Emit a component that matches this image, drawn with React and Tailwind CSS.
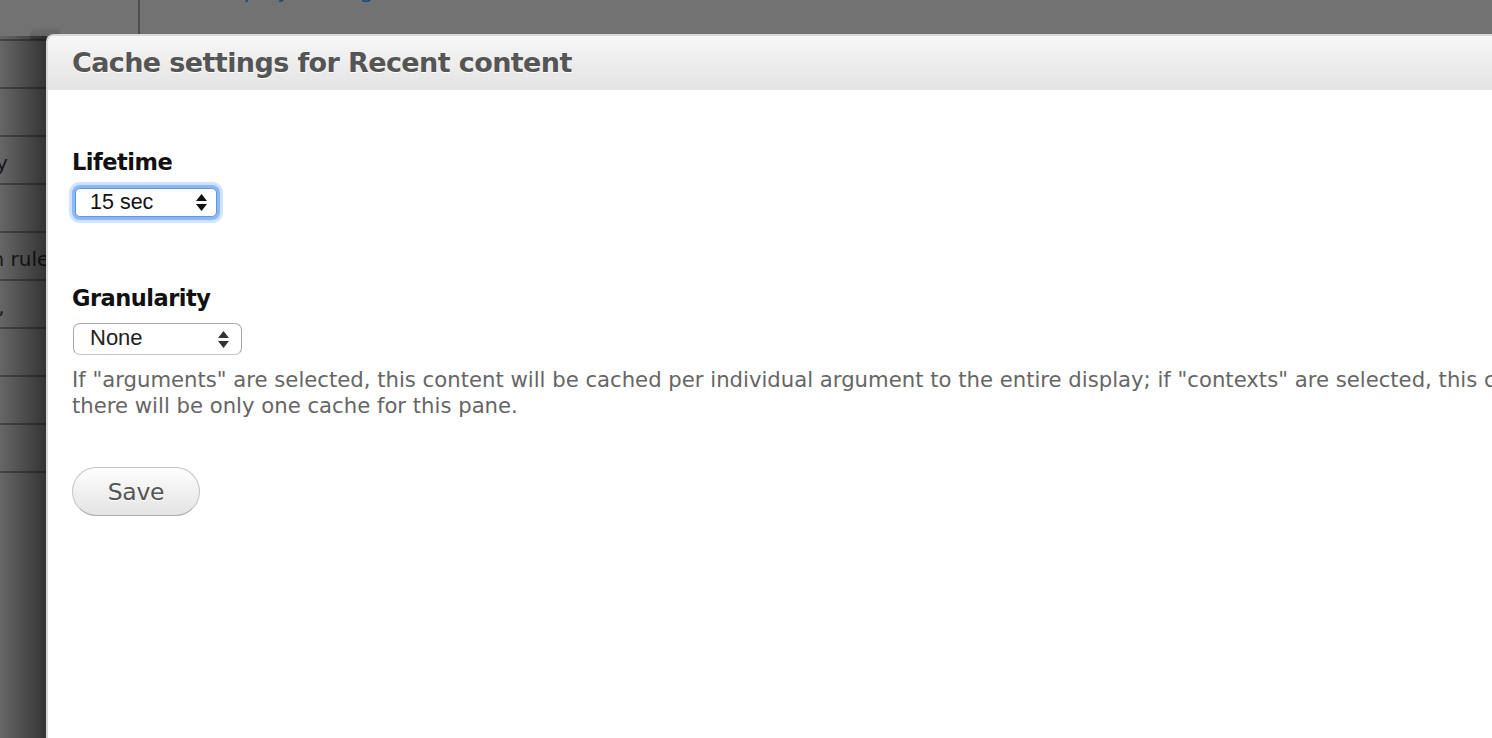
import React from 'react';

const sans = { fontFamily: '"DejaVu Sans", Verdana, sans-serif' };
const arial = { fontFamily: '"Liberation Sans", Arial, sans-serif' };

// little up/down triangles of a native select
const Arrows = ({ color = '#111' }) => (
  <svg width="11" height="17" viewBox="0 0 11 17" className="shrink-0">
    <path d="M5.5 0 L11 7 L0 7 Z" fill={color} />
    <path d="M0 10 L11 10 L5.5 17 Z" fill={color} />
  </svg>
);

const bgRows = [
  { text: '', ml: 0 },
  { text: '', ml: 0 },
  { text: 'Display', ml: -66 },
  { text: '', ml: 0 },
  { text: 'Selection rule', ml: -88 },
  { text: 'Context,', ml: -80 },
  { text: '', ml: 0 },
  { text: '', ml: 0 },
  { text: '', ml: 0 },
];

export default function App() {
  return (
    <div className="relative w-[1492px] h-[738px] overflow-hidden bg-[#727272]">
      {/* page behind the dialog */}
      <div className="flex h-full">
        <div className="w-[140px] shrink-0 border-r-2 border-[#4e4e4e] text-[20px] text-[#1c1c1c]" style={sans}>
          <div className="h-[41px] border-b-2 border-[#4e4e4e]" />
          {bgRows.map((r, i) => (
            <div
              key={i}
              className="h-[48px] border-b-2 border-[#4e4e4e] flex items-center pt-[6px] whitespace-nowrap"
            >
              {r.text && <span style={{ marginLeft: r.ml }}>{r.text}</span>}
            </div>
          ))}
        </div>
        <div className="flex-1 pl-[69px]">
          <div className="-mt-[21px] text-[22px] leading-[24px] text-[#0d4c84] whitespace-nowrap" style={sans}>
            Display settings
          </div>
        </div>
      </div>

      {/* dialog shadow on the left */}
      <div className="absolute left-0 top-[36px] bottom-0 w-[47px] bg-linear-to-r from-black/10 to-black/55" />
      <div className="absolute left-[30px] top-[26px] w-[30px] h-[14px] bg-linear-to-b from-transparent to-black/20 rounded-tl-[10px]" />

      {/* dialog */}
      <div className="absolute left-[46px] top-[34px] w-[1500px] h-[720px] bg-white border-l-2 border-t-2 border-[#d8d8d8] rounded-tl-[8px] overflow-hidden">
        <div className="h-[54px] flex items-center pl-[24px] bg-linear-to-b from-[#f7f7f7] to-[#e3e3e3]">
          <h1
            className="text-[27px] leading-[32px] font-bold tracking-[-0.6px] text-[#555] [text-shadow:0_1px_0_#fff]"
            style={sans}
          >
            Cache settings for Recent content
          </h1>
        </div>

        <div className="pl-[24px] pt-[59px]">
          <label className="block text-[22.5px] leading-[26px] font-bold tracking-[-0.5px] text-[#111]" style={sans}>
            Lifetime
          </label>
          <div className="mt-[13px] ml-[3px] w-[142px] h-[29px] rounded-[5px] bg-white border border-[#5f97e6] shadow-[0_0_0_3px_#8cb8f5,0_0_1px_6px_rgba(150,190,246,0.45)] flex items-center justify-between pl-[14px] pr-[9px]">
            <span className="text-[21.5px] leading-none text-[#111]" style={arial}>15 sec</span>
            <Arrows color="#111" />
          </div>

          <label className="block mt-[68px] text-[22.5px] leading-[26px] font-bold tracking-[-0.5px] text-[#111]" style={sans}>
            Granularity
          </label>
          <div className="mt-[12px] ml-[1px] w-[169px] h-[32px] rounded-[7px] bg-white border border-[#a9a9a9] border-b-[#c6c6c6] flex items-center justify-between pl-[16px] pr-[12px]">
            <span className="text-[22px] leading-none text-[#222] -mt-[2px]" style={arial}>None</span>
            <Arrows color="#333" />
          </div>

          <p className="mt-[12px] text-[21.2px] leading-[26px] text-[#666] whitespace-nowrap" style={sans}>
            If "arguments" are selected, this content will be cached per individual argument to the entire display; if "contexts" are selected, this content will be cached per unique context in the pane or display; if "neither"
            <br />
            there will be only one cache for this pane.
          </p>

          <button
            className="mt-[48px] w-[128px] h-[49px] rounded-full border border-[#c4c4c4] border-b-[#ababab] bg-linear-to-b from-[#fefefe] to-[#e4e4e4] text-[23.5px] text-[#555] tracking-[-0.3px] [text-shadow:0_1px_0_#fff] flex items-center justify-center pt-[3px]"
            style={sans}
          >
            Save
          </button>
        </div>
      </div>
    </div>
  );
}
